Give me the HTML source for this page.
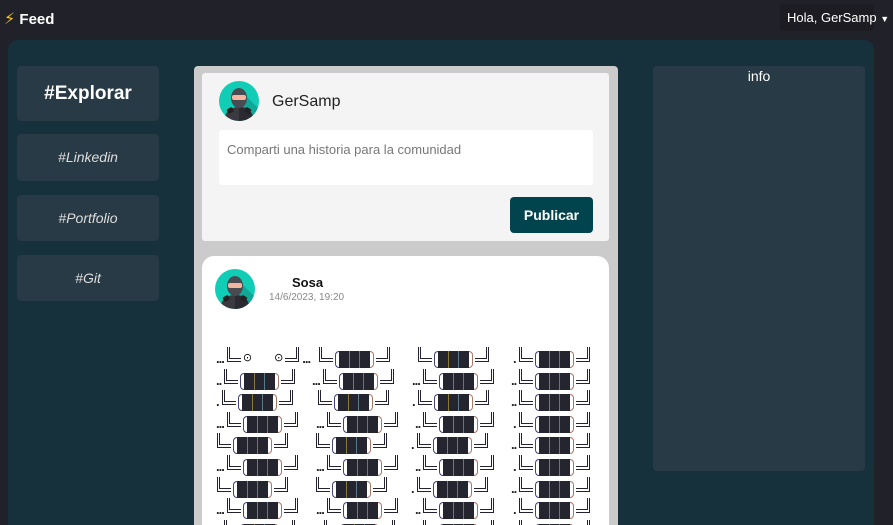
<!DOCTYPE html>
<html><head><meta charset="utf-8">
<style>
*{box-sizing:border-box;margin:0;padding:0}
html,body{width:893px;height:525px;overflow:hidden}
body{background:#212129;font-family:"Liberation Sans","DejaVu Sans",sans-serif;position:relative}
.nav{position:absolute;left:0;top:0;width:893px;height:36px;background:#212129}
.brand{position:absolute;left:4px;top:9px;color:#fff;font-weight:bold;font-size:15px;white-space:nowrap}
.dd{position:absolute;left:780px;top:4px;width:94px;height:27px;background:#1c1c22;color:#fff;font-size:13px;padding:6px 0 0 7px;border-radius:3px;white-space:nowrap}
.main{position:absolute;left:8px;top:40px;width:866px;height:485px;background:#16303c;border-radius:10px 10px 0 0}
.side{position:absolute;left:17px;width:142px;background:#283a45;border-radius:4px;color:#ddd;text-align:center;font-style:italic;font-size:14px}
.info{position:absolute;left:653px;top:66px;width:212px;height:405px;background:#283a45;border-radius:4px;color:#fff;text-align:center;font-size:14px;padding-top:2px}
.col{position:absolute;left:194px;top:66px;width:424px;height:459px;background:#cbcbcb;border-radius:4px 4px 0 0}
.comp{position:absolute;left:202px;top:73px;width:407px;height:168px;background:#f4f4f4;border-radius:3px}
.ta{position:absolute;left:219px;top:130px;width:374px;height:55px;background:#fff;border-radius:3px;color:#777;font-size:13px;padding:12px 8px}
.btn{position:absolute;left:510px;top:197px;width:83px;height:36px;background:#02444d;border-radius:4px;color:#fff;font-weight:bold;font-size:14px;text-align:center;line-height:36px}
.post{position:absolute;left:202px;top:256px;width:407px;height:269px;background:#fff;border-radius:12px 12px 0 0}
.av{position:absolute;width:40px;height:40px}
.f{position:absolute;display:flex;align-items:flex-start;height:22px}
.d{font-size:13px;color:#222;margin-top:4px;margin-right:3px;letter-spacing:-1px;font-weight:bold}
.l{width:14px;height:15px;border-left:3px double #223;border-bottom:4px double #223;margin-right:2px}
.r{width:14px;height:15px;border-right:3px double #223;border-bottom:4px double #223;margin-left:2px}
.p{width:4px;height:17px;margin-top:4px;border:1px solid #447;border-right:none;border-radius:4px 0 0 4px}
.q{width:4px;height:17px;margin-top:4px;border:1px solid #a76;border-left:none;border-radius:0 4px 4px 0}
.b{width:31px;height:17px;margin-top:4px;background:#25252f;background-image:linear-gradient(90deg,transparent 10px,#8a7a3a 10px,#8a7a3a 11px,transparent 11px,transparent 20px,#5a7a8a 20px,#5a7a8a 21px,transparent 21px)}
</style></head><body>
<div class="nav"><div class="brand"><span style="color:#f5c518;font-size:16px">⚡</span> Feed</div><div class="dd">Hola, GerSamp <span style="font-size:9px">▼</span></div></div>
<div class="main"></div>
<div class="side" style="top:66px;height:55px;font-style:normal;font-weight:bold;font-size:19px;color:#fff;line-height:55px">#Explorar</div>
<div class="side" style="top:134px;height:47px;line-height:47px">#Linkedin</div>
<div class="side" style="top:195px;height:46px;line-height:46px">#Portfolio</div>
<div class="side" style="top:255px;height:46px;line-height:46px">#Git</div>
<div class="info">info</div>
<div class="col"></div>
<div class="comp"></div>
<svg class="av" style="left:219px;top:81px" viewBox="0 0 40 40"><defs><clipPath id="c"><circle cx="20" cy="20" r="20"/></clipPath></defs><g clip-path="url(#c)"><rect width="40" height="40" fill="#12cdb5"/><path d="M20 8L40 28V40H20Z" fill="#0fa898"/><path d="M5 40C6 30 12 26 20 26C28 26 34 30 35 40Z" fill="#3a3a40"/><path d="M20 26C28 26 34 30 35 40H20Z" fill="#2a2a30"/><ellipse cx="20" cy="17" rx="8" ry="10" fill="#4a4a52"/><rect x="13" y="14" width="14" height="5" rx="2" fill="#f3b4a0"/><rect x="8" y="27" width="6" height="5" rx="1" fill="#222" transform="rotate(-30 11 29)"/><rect x="26" y="27" width="6" height="5" rx="1" fill="#222" transform="rotate(30 29 29)"/></g></svg>
<div style="position:absolute;left:272px;top:93px;font-size:16px;color:#222">GerSamp</div>
<div class="ta">Comparti una historia para la comunidad</div>
<div class="btn">Publicar</div>
<div class="post"></div>
<svg class="av" style="left:215px;top:269px" viewBox="0 0 40 40"><g clip-path="url(#c)"><rect width="40" height="40" fill="#12cdb5"/><path d="M20 8L40 28V40H20Z" fill="#0fa898"/><path d="M5 40C6 30 12 26 20 26C28 26 34 30 35 40Z" fill="#3a3a40"/><path d="M20 26C28 26 34 30 35 40H20Z" fill="#2a2a30"/><ellipse cx="20" cy="17" rx="8" ry="10" fill="#4a4a52"/><rect x="13" y="14" width="14" height="5" rx="2" fill="#f3b4a0"/><rect x="8" y="27" width="6" height="5" rx="1" fill="#222" transform="rotate(-30 11 29)"/><rect x="26" y="27" width="6" height="5" rx="1" fill="#222" transform="rotate(30 29 29)"/></g></svg>
<div style="position:absolute;left:292px;top:275px;font-size:13px;font-weight:bold;color:#111">Sosa</div>
<div style="position:absolute;left:269px;top:292px;font-size:10px;color:#888">14/6/2023, 19:20</div>

<div class="f" style="left:216px;top:347px"><span class="d">...</span><div class="l"></div><span style="font-size:11px;margin-top:4px">⊙</span><span style="width:22px"></span><span style="font-size:11px;margin-top:4px">⊙</span><div class="r"></div><span class="d" style="margin-left:3px">...</span></div>

<div class="f" style="left:319px;top:347px"><div class="l"></div><div class="p"></div><div class="b"></div><div class="q"></div><div class="r"></div></div>
<div class="f" style="left:418px;top:347px"><div class="l"></div><div class="p"></div><div class="b"></div><div class="q"></div><div class="r"></div></div>
<div class="f" style="left:513px;top:347px"><span class="d">.</span><div class="l"></div><div class="p"></div><div class="b"></div><div class="q"></div><div class="r"></div></div>

<div class="f" style="left:216px;top:369px"><span class="d">..</span><div class="l"></div><div class="p"></div><div class="b"></div><div class="q"></div><div class="r"></div></div>
<div class="f" style="left:312px;top:369px"><span class="d">...</span><div class="l"></div><div class="p"></div><div class="b"></div><div class="q"></div><div class="r"></div></div>
<div class="f" style="left:412px;top:369px"><span class="d">...</span><div class="l"></div><div class="p"></div><div class="b"></div><div class="q"></div><div class="r"></div></div>
<div class="f" style="left:511px;top:369px"><span class="d">..</span><div class="l"></div><div class="p"></div><div class="b"></div><div class="q"></div><div class="r"></div></div>

<div class="f" style="left:216px;top:390px"><span class="d">.</span><div class="l"></div><div class="p"></div><div class="b"></div><div class="q"></div><div class="r"></div></div>
<div class="f" style="left:318px;top:390px"><div class="l"></div><div class="p"></div><div class="b"></div><div class="q"></div><div class="r"></div></div>
<div class="f" style="left:412px;top:390px"><span class="d">.</span><div class="l"></div><div class="p"></div><div class="b"></div><div class="q"></div><div class="r"></div></div>
<div class="f" style="left:511px;top:390px"><span class="d">..</span><div class="l"></div><div class="p"></div><div class="b"></div><div class="q"></div><div class="r"></div></div>

<div class="f" style="left:216px;top:412px"><span class="d">...</span><div class="l"></div><div class="p"></div><div class="b"></div><div class="q"></div><div class="r"></div></div>
<div class="f" style="left:316px;top:412px"><span class="d">...</span><div class="l"></div><div class="p"></div><div class="b"></div><div class="q"></div><div class="r"></div></div>
<div class="f" style="left:415px;top:412px"><span class="d">..</span><div class="l"></div><div class="p"></div><div class="b"></div><div class="q"></div><div class="r"></div></div>
<div class="f" style="left:513px;top:412px"><span class="d">.</span><div class="l"></div><div class="p"></div><div class="b"></div><div class="q"></div><div class="r"></div></div>

<div class="f" style="left:217px;top:433px"><div class="l"></div><div class="p"></div><div class="b"></div><div class="q"></div><div class="r"></div></div>
<div class="f" style="left:316px;top:433px"><div class="l"></div><div class="p"></div><div class="b"></div><div class="q"></div><div class="r"></div></div>
<div class="f" style="left:411px;top:433px"><span class="d">.</span><div class="l"></div><div class="p"></div><div class="b"></div><div class="q"></div><div class="r"></div></div>
<div class="f" style="left:511px;top:433px"><span class="d">..</span><div class="l"></div><div class="p"></div><div class="b"></div><div class="q"></div><div class="r"></div></div>

<div class="f" style="left:216px;top:455px"><span class="d">...</span><div class="l"></div><div class="p"></div><div class="b"></div><div class="q"></div><div class="r"></div></div>
<div class="f" style="left:316px;top:455px"><span class="d">...</span><div class="l"></div><div class="p"></div><div class="b"></div><div class="q"></div><div class="r"></div></div>
<div class="f" style="left:415px;top:455px"><span class="d">..</span><div class="l"></div><div class="p"></div><div class="b"></div><div class="q"></div><div class="r"></div></div>
<div class="f" style="left:513px;top:455px"><span class="d">.</span><div class="l"></div><div class="p"></div><div class="b"></div><div class="q"></div><div class="r"></div></div>

<div class="f" style="left:217px;top:477px"><div class="l"></div><div class="p"></div><div class="b"></div><div class="q"></div><div class="r"></div></div>
<div class="f" style="left:316px;top:477px"><div class="l"></div><div class="p"></div><div class="b"></div><div class="q"></div><div class="r"></div></div>
<div class="f" style="left:411px;top:477px"><span class="d">.</span><div class="l"></div><div class="p"></div><div class="b"></div><div class="q"></div><div class="r"></div></div>
<div class="f" style="left:511px;top:477px"><span class="d">..</span><div class="l"></div><div class="p"></div><div class="b"></div><div class="q"></div><div class="r"></div></div>

<div class="f" style="left:216px;top:498px"><span class="d">...</span><div class="l"></div><div class="p"></div><div class="b"></div><div class="q"></div><div class="r"></div></div>
<div class="f" style="left:316px;top:498px"><span class="d">...</span><div class="l"></div><div class="p"></div><div class="b"></div><div class="q"></div><div class="r"></div></div>
<div class="f" style="left:415px;top:498px"><span class="d">..</span><div class="l"></div><div class="p"></div><div class="b"></div><div class="q"></div><div class="r"></div></div>
<div class="f" style="left:513px;top:498px"><span class="d">.</span><div class="l"></div><div class="p"></div><div class="b"></div><div class="q"></div><div class="r"></div></div>

<div class="f" style="left:216px;top:520px"><span class="d">..</span><div class="l"></div><div class="p"></div><div class="b"></div><div class="q"></div><div class="r"></div></div>
<div class="f" style="left:316px;top:520px"><span class="d">..</span><div class="l"></div><div class="p"></div><div class="b"></div><div class="q"></div><div class="r"></div></div>
<div class="f" style="left:415px;top:520px"><span class="d">..</span><div class="l"></div><div class="p"></div><div class="b"></div><div class="q"></div><div class="r"></div></div>
<div class="f" style="left:513px;top:520px"><span class="d">.</span><div class="l"></div><div class="p"></div><div class="b"></div><div class="q"></div><div class="r"></div></div>
</body></html>
